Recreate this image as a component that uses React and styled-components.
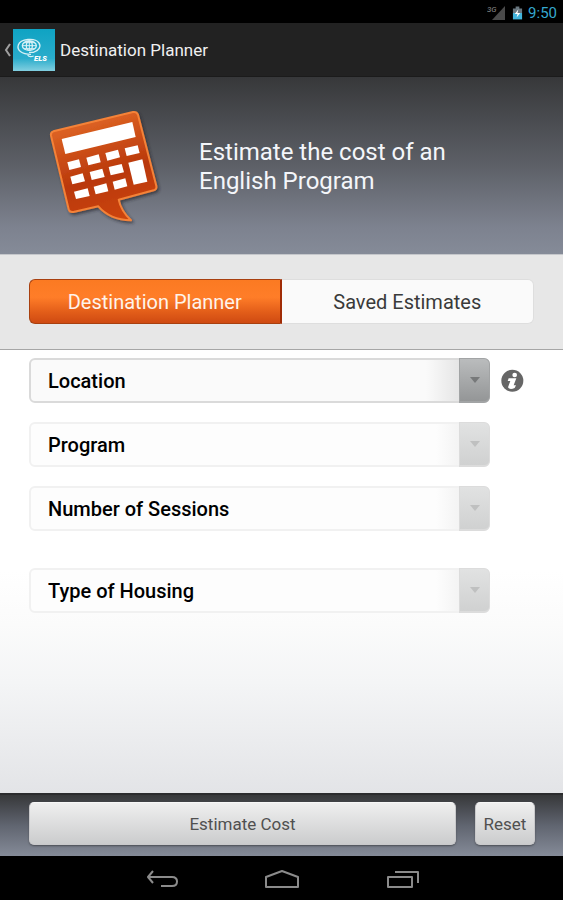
import React from "react";
import styled, { createGlobalStyle, css } from "styled-components";

const GlobalStyle = createGlobalStyle`
  *, *::before, *::after { box-sizing: border-box; }
  body { margin: 0; background: #000; }
  body, button, select { font-family: Roboto, "Liberation Sans", sans-serif; }
  button, select { margin: 0; }
`;

const Screen = styled.div`
  display: flex;
  flex-direction: column;
  min-height: 100vh;
`;

const StatusBar = styled.div`
  display: flex;
  align-items: center;
  justify-content: flex-end;
  gap: 5px;
  height: 23px;
  padding: 2px 6px 0;
  background: #000;
  color: #35a8cf;
  font-size: 15px;
  line-height: 20px;
`;

const ActionBar = styled.header`
  display: flex;
  align-items: center;
  height: 54px;
  padding: 0 4px;
  background: #222;
  border-bottom: 1px solid #1b1b1b;
`;

const BackButton = styled.button`
  display: flex;
  align-items: center;
  gap: 2px;
  padding: 0;
  border: 0;
  background: none;
`;

const BarTitle = styled.h1`
  margin: 0 0 0 5px;
  color: #f0f0f0;
  font-size: 17px;
  font-weight: 400;
  line-height: 24px;
`;

const Hero = styled.section`
  display: flex;
  align-items: center;
  gap: 19px;
  height: 177px;
  padding: 0 30px;
  background: linear-gradient(#37383a, #5d6067 50%, #7d828f 85%, #858b98);
`;

const HeroText = styled.h2`
  flex: 0 1 270px;
  margin: 0;
  padding-top: 2px;
  color: #f4f6fa;
  font-size: 24px;
  font-weight: 400;
  line-height: 29px;
`;

const TabStrip = styled.nav`
  display: grid;
  grid-template-columns: 1fr 1fr;
  padding: 24px 29px 25px;
  background: #e7e7e7;
  border-top: 1px solid #c5c7cb;
  border-bottom: 1px solid #a6a6a6;
`;

const Tab = styled.button`
  height: 45px;
  padding: 0;
  font-size: 20px;
  line-height: 24px;
  ${({ $active }) =>
    $active
      ? css`
          border: 1px solid #a8400f;
          border-right: 2px solid #a02c06;
          border-radius: 6px 0 0 6px;
          background: linear-gradient(#fb7a22, #ff7d28 40%, #e25d19 75%, #cf4a12);
          color: #fff3ea;
        `
      : css`
          border: 1px solid #dedede;
          border-left: 0;
          border-radius: 0 6px 6px 0;
          background: #fafafa;
          color: #3a3a3a;
        `}
`;

const Form = styled.main`
  display: flex;
  flex: 1;
  flex-direction: column;
  gap: 19px;
  padding: 8px 39px 30px 29px;
  background: linear-gradient(#fff 50%, #fbfbfb 62%, #f4f5f6 75%, #e3e4e7);
`;

const Field = styled.div`
  display: grid;
  grid-template-columns: 1fr 23px;
  align-items: center;
  gap: 11px;
  margin-top: ${({ $apart }) => ($apart ? "18px" : "0")};
`;

const Picker = styled.div`
  display: grid;
  grid-template: 45px / 1fr 31px;
  border-radius: 6px;
`;

const Select = styled.select`
  grid-area: 1 / 1 / 2 / 3;
  width: 100%;
  padding: 0 42px 0 17px;
  appearance: none;
  border: 2px solid #dadada;
  border-radius: 6px;
  background: linear-gradient(90deg, #fafafa calc(100% - 62px), #e6e6e6 calc(100% - 30px));
  color: #000;
  font-size: 20px;
  font-weight: 500;
  line-height: 24px;

  &:disabled {
    border-color: #f1f1f1;
    background: linear-gradient(90deg, #fdfdfd calc(100% - 52px), #f4f4f4 calc(100% - 30px));
    opacity: 1;
  }
`;

const Arrow = styled.span`
  grid-area: 1 / 2 / 2 / 3;
  display: grid;
  place-items: center;
  border: solid #a2a4a5;
  border-width: 1px 1px 2px 1px;
  border-radius: 0 6px 6px 0;
  background: linear-gradient(#babcbd, #949697);
  color: #77797a;
  pointer-events: none;

  ${Select}:disabled + & {
    border-color: #dcdcdc;
    background: linear-gradient(#e1e2e2, #d0d1d1);
    color: #bfc0c0;
  }
`;

const InfoButton = styled.button`
  display: grid;
  width: 23px;
  height: 23px;
  padding: 0;
  border: 0;
  border-radius: 50%;
  background: none;
`;

const Footer = styled.footer`
  display: grid;
  grid-template-columns: 1fr 60px;
  gap: 19px;
  padding: 7px 28px 11px 29px;
  border-top: 2px solid #2b2c2e;
  background: linear-gradient(#37383a, #606570 50%, #858b98);
`;

const ActionButton = styled.button`
  height: 43px;
  padding: 0;
  border: 1px solid #c9c9cb;
  border-top-color: #f7f7f7;
  border-radius: 5px;
  background: linear-gradient(#efefef, #cbcccd);
  box-shadow: 0 1px 2px #4b4e55;
  color: #505050;
  font-size: 17px;
  line-height: 24px;
`;

const SystemNav = styled.nav`
  display: flex;
  align-items: center;
  justify-content: center;
  gap: 84px;
  height: 44px;
  padding-top: 2px;
  background: #000;
`;

const NavButton = styled.button`
  display: grid;
  padding: 0;
  border: 0;
  background: none;
`;

const fields = [
  { name: "Location", info: true },
  { name: "Program", off: true },
  { name: "Number of Sessions", off: true },
  { name: "Type of Housing", off: true, apart: true },
];

function Signal() {
  return (
    <svg width="20" height="18" viewBox="0 0 20 18" aria-hidden="true">
      <path d="M18 2V16H5Z" fill="#4a4a4a" />
      <text x="0" y="8" fill="#8a8a8a" fontSize="8" fontStyle="italic" fontFamily="Roboto, sans-serif">3G</text>
    </svg>
  );
}

function Battery() {
  return (
    <svg width="11" height="16" viewBox="0 0 12 16" aria-hidden="true">
      <path d="M4 1H8V3H11V8H1V3H4Z" fill="#697780" />
      <path d="M1 8H11V15H1Z" fill="#43b5dd" />
      <path d="M7 4L3 9H6L5 13L9 8H6Z" fill="#fff" />
    </svg>
  );
}

function Chevron() {
  return (
    <svg width="7" height="16" viewBox="0 0 7 16" aria-hidden="true">
      <path d="M6 2L2 8L6 14" fill="none" stroke="#a0a0a0" strokeWidth="2" />
    </svg>
  );
}

function Logo() {
  return (
    <svg width="42" height="42" viewBox="0 0 126 126" aria-hidden="true">
      <defs>
        <linearGradient id="logoFill" x2="0" y2="1">
          <stop offset="0" stopColor="#0fa3c3" />
          <stop offset=".7" stopColor="#2aaccb" />
          <stop offset="1" stopColor="#82cfe0" />
        </linearGradient>
      </defs>
      <rect width="126" height="126" fill="url(#logoFill)" />
      <g fill="none" stroke="#d8f1f6" strokeWidth="4">
        <path d="M54 76C25 75 11 63 16 48C22 29 66 25 78 42C85 52 78 66 61 70L48 70" />
        <ellipse cx="49" cy="50" rx="21" ry="14" />
        <ellipse cx="49" cy="50" rx="9" ry="14" />
        <path d="M28 50H70M49 36V64M33 41H65M33 59H65" strokeWidth="3" />
        <path d="M44 78C47 83 54 84 62 81" />
      </g>
      <text x="63" y="96" fill="#fff" fontSize="23" fontWeight="900" fontStyle="italic" fontFamily="Roboto, sans-serif">ELS</text>
    </svg>
  );
}

function Calculator() {
  return (
    <svg width="150" height="140" viewBox="0 0 450 420" aria-hidden="true">
      <defs>
        <linearGradient id="calcFill" x1="0.3" y1="0" x2="0.6" y2="1">
          <stop offset="0" stopColor="#e36a27" />
          <stop offset=".6" stopColor="#b9380c" />
          <stop offset="1" stopColor="#cb4410" />
        </linearGradient>
        <filter id="calcShadow" x="-10%" y="-10%" width="125%" height="125%">
          <feDropShadow dx="5" dy="6" stdDeviation="5" floodColor="#25262a" floodOpacity=".65" />
        </filter>
      </defs>
      <path
        d="M70 106L309 48Q320 46 324 56L379 270Q381 280 371 283L266 311Q273 345 303 373Q239 371 205 331L130 348Q119 350 116 340L63 119Q61 109 70 106Z"
        fill="url(#calcFill)"
        stroke="#f48238"
        strokeWidth="6"
        strokeLinejoin="round"
        filter="url(#calcShadow)"
      />
      <g fill="#fff">
        <path d="M95 129L307 78L317 123L106 174Z" />
        <path d="M112 199L147 190L153 213L118 222Z" />
        <path d="M169 185L206 175L212 199L175 208Z" />
        <path d="M226 171L264 161L270 184L232 194Z" />
        <path d="M284 157L323 148L329 171L290 180Z" />
        <path d="M121 242L158 232L165 256L127 265Z" />
        <path d="M179 228L217 218L224 243L185 252Z" />
        <path d="M236 213L275 204L282 229L242 238Z" />
        <path d="M295 200L337 190L352 257L311 266Z" />
        <path d="M132 287L173 277L179 300L138 309Z" />
        <path d="M191 272L229 262L235 286L197 295Z" />
        <path d="M248 257L286 247L292 271L254 281Z" />
      </g>
    </svg>
  );
}

function InfoIcon() {
  return (
    <svg width="23" height="23" viewBox="0 0 69 69" aria-hidden="true">
      <circle cx="34" cy="35" r="33" fill="#666" />
      <circle cx="41" cy="18" r="7" fill="#fff" />
      <path d="M23 28H46L38 49H45L41 57Q26 64 21 55L28 36H20Z" fill="#fff" />
    </svg>
  );
}

function NavIcon({ d }) {
  return (
    <svg width="36" height="20" viewBox="0 0 36 20" fill="none" stroke="#8b8b8b" strokeWidth="2" strokeLinejoin="round" aria-hidden="true">
      <path d={d} />
    </svg>
  );
}

export default function App() {
  return (
    <>
      <GlobalStyle />
      <Screen>
        <StatusBar>
          <Signal />
          <Battery />
          <span>9:50</span>
        </StatusBar>
        <ActionBar>
          <BackButton aria-label="Back">
            <Chevron />
            <Logo />
          </BackButton>
          <BarTitle>Destination Planner</BarTitle>
        </ActionBar>
        <Hero>
          <Calculator />
          <HeroText>Estimate the cost of an English Program</HeroText>
        </Hero>
        <TabStrip>
          <Tab $active aria-current="page">Destination Planner</Tab>
          <Tab>Saved Estimates</Tab>
        </TabStrip>
        <Form>
          {fields.map(({ name, info, off, apart }) => (
            <Field key={name} $apart={apart}>
              <Picker>
                <Select aria-label={name} disabled={off}>
                  <option>{name}</option>
                </Select>
                <Arrow>
                  <svg width="10" height="6" viewBox="0 0 10 6" aria-hidden="true">
                    <path d="M0 0H10L5 6Z" fill="currentColor" />
                  </svg>
                </Arrow>
              </Picker>
              {info && (
                <InfoButton aria-label="About locations">
                  <InfoIcon />
                </InfoButton>
              )}
            </Field>
          ))}
        </Form>
        <Footer>
          <ActionButton>Estimate Cost</ActionButton>
          <ActionButton>Reset</ActionButton>
        </Footer>
        <SystemNav>
          <NavButton aria-label="Back">
            <NavIcon d="M9 2L4 8L9 14M4 8H28Q33 8 33 12.5Q33 17 28 17H17" />
          </NavButton>
          <NavButton aria-label="Home">
            <NavIcon d="M2 18V8L18 2L34 8V18Z" />
          </NavButton>
          <NavButton aria-label="Recent apps">
            <NavIcon d="M4 8H28V18H4ZM11 3H34V14" />
          </NavButton>
        </SystemNav>
      </Screen>
    </>
  );
}
